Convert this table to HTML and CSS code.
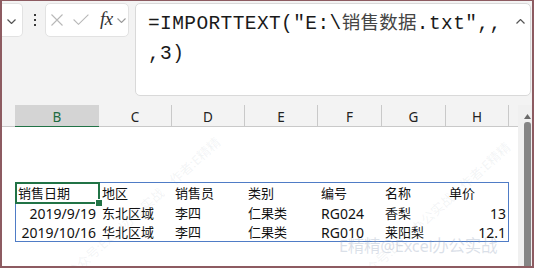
FILE: index.html
```html
<!DOCTYPE html>
<html>
<head>
<meta charset="utf-8">
<link rel="stylesheet" href="styles.css">
</head>
<body>
<div class="window">
  <div class="topbar">
    <div class="namebox">
      <svg width="9" height="5" viewBox="0 0 9 5"><path d="M0.5 0.5 L4.5 4.5 L8.5 0.5" stroke="#555" fill="none" stroke-width="1.2"/></svg>
    </div>
    <div class="dots"><i></i><i></i><i></i></div>
    <div class="fnbox">
      <svg class="ic-x" width="12" height="12" viewBox="0 0 12 12"><path d="M0.5 0.5 L11.5 11.5 M11.5 0.5 L0.5 11.5" stroke="#b8b8b8" stroke-width="1.1" fill="none"/></svg>
      <svg class="ic-ok" width="16" height="11" viewBox="0 0 16 11"><path d="M0.6 5.5 L5.5 10.3 L15.4 0.6" stroke="#b8b8b8" stroke-width="1.1" fill="none"/></svg>
      <span class="fx">fx</span>
      <svg class="ic-dd" width="9" height="5" viewBox="0 0 9 5"><path d="M0.5 0.5 L4.5 4.5 L8.5 0.5" stroke="#9a9a9a" fill="none" stroke-width="1.1"/></svg>
    </div>
    <div class="formula">
      <div class="ftext">=IMPORTTEXT("E:\<span class="cjk">销售数据</span>.txt",,<br>,3)</div>
      <svg class="collapse" width="9" height="5" viewBox="0 0 9 5"><path d="M0.5 4.5 L4.5 0.5 L8.5 4.5" stroke="#555" fill="none" stroke-width="1.2"/></svg>
    </div>
  </div>
  <div class="main">
    <div class="sheet">
      <div class="colhead">
        <div class="corner"></div>
        <div class="ch sel">B</div>
        <div class="ch">C</div>
        <div class="ch">D</div>
        <div class="ch">E</div>
        <div class="ch">F</div>
        <div class="ch">G</div>
        <div class="ch">H</div>
        <div class="rest"></div>
      </div>
      <div class="cells">
        <div class="table">
          <div class="cell active">销售日期</div>
          <div class="cell">地区</div>
          <div class="cell">销售员</div>
          <div class="cell">类别</div>
          <div class="cell">编号</div>
          <div class="cell">名称</div>
          <div class="cell">单价</div>

          <div class="cell num lat">2019/9/19</div>
          <div class="cell">东北区域</div>
          <div class="cell">李四</div>
          <div class="cell">仁果类</div>
          <div class="cell lat">RG024</div>
          <div class="cell">香梨</div>
          <div class="cell num lat">13</div>

          <div class="cell num lat">2019/10/16</div>
          <div class="cell">华北区域</div>
          <div class="cell">李四</div>
          <div class="cell">仁果类</div>
          <div class="cell lat">RG010</div>
          <div class="cell">莱阳梨</div>
          <div class="cell num lat">12.1</div>
        </div>
        <div class="wm wm-h">E精精@Excel办公实战</div>
        <div class="wm wm-d wm-d1">公众号:Excel办公实战　作者:E精精</div>
        <div class="wm wm-d wm-d2">公众号:Excel办公实战　作者:E精精</div>
      </div>
    </div>
    <div class="vscroll">
      <svg class="up" width="7" height="5" viewBox="0 0 7 5"><path d="M0 5 L3.5 0 L7 5 Z" fill="#6a6a6a"/></svg>
      <div class="thumb"></div>
    </div>
  </div>
</div>
</body>
</html>
```

FILE: styles.css
```css
* { box-sizing: border-box; }
html, body { margin: 0; padding: 0; }
body {
  width: 534px;
  height: 268px;
  overflow: hidden;
  background: #ffffff;
  font-family: "Noto Sans", "Noto Sans CJK SC", sans-serif;
}
.window {
  width: 534px;
  height: 268px;
  border-style: solid;
  border-color: #8d5b61;
  border-width: 1px 2px 2px 2px;
  display: flex;
  flex-direction: column;
  background: #f3f3f3;
}
.topbar {
  height: 104px;
  flex: none;
  display: flex;
  align-items: flex-start;
  padding-top: 2px;
  background: #f3f3f3;
}
.namebox {
  width: 21px;
  height: 34px;
  background: #fff;
  border: 1px solid #e2e2e2;
  border-left: none;
  border-radius: 0 5px 5px 0;
  display: flex;
  align-items: center;
  justify-content: flex-end;
  padding-right: 6px;
  padding-top: 2px;
}
.namebox svg { display: block; }
.dots {
  width: 22px;
  height: 34px;
  display: flex;
  flex-direction: column;
  align-items: center;
  justify-content: center;
  gap: 3px;
  padding-left: 1px;
}
.dots i {
  display: block;
  width: 2px;
  height: 2px;
  background: #3a3a3a;
}
.fnbox {
  width: 84px;
  height: 34px;
  background: #fff;
  border: 1px solid #e2e2e2;
  border-radius: 5px;
  display: flex;
  align-items: center;
}
.fnbox svg { display: block; flex: none; }
.ic-x { margin-left: 5px; }
.ic-ok { margin-left: 10px; margin-top: -1px; }
.fx {
  margin-left: 11px;
  font-family: "Liberation Serif", serif;
  font-style: italic;
  font-size: 19px;
  line-height: 20px;
  color: #333;
  letter-spacing: -0.5px;
  margin-top: -2px;
}
.ic-dd { margin-left: 4px; }
.formula {
  flex: 1;
  height: 93px;
  margin-left: 6px;
  margin-right: 1px;
  background: #fff;
  border: 1px solid #d9d9d9;
  border-radius: 5px;
  display: flex;
  align-items: flex-start;
  padding-left: 12px;
  padding-top: 2px;
}
.ftext {
  flex: 1;
  font-family: "Liberation Mono", "DejaVu Sans Mono", "Noto Sans CJK SC", monospace;
  font-size: 19.5px;
  letter-spacing: 0.4px;
  line-height: 30px;
  color: #1a1a1a;
  white-space: nowrap;
}
.cjk {
  font-family: "Noto Sans CJK SC", sans-serif;
  font-size: 18.5px;
  letter-spacing: 0.3px;
  color: #444;
}
.collapse {
  display: block;
  flex: none;
  margin-top: 13px;
  margin-right: 5px;
}
.main {
  flex: 1;
  display: flex;
  min-height: 0;
}
.sheet {
  flex: 1;
  display: flex;
  flex-direction: column;
}
.colhead {
  height: 22px;
  flex: none;
  display: grid;
  grid-template-columns: 13px 84px 73px 73px 73px 64px 64px 63px 1fr;
  background: #f3f3f3;
  border-bottom: 1px solid #c9c9c9;
}
.ch {
  border-right: 1px solid #c9c9c9;
  display: flex;
  align-items: center;
  justify-content: center;
  font-size: 13.5px;
  color: #222;
  padding-top: 1px;
}
.ch.sel {
  background: #d4d4d4;
  color: #1e6b41;
  border-right: none;
  border-bottom: 2px solid #217346;
  padding-top: 3px;
}
.cells {
  flex: 1;
  background: #fff;
  position: relative;
  padding-top: 55px;
  padding-left: 13px;
  overflow: hidden;
}
.table {
  width: 494px;
  display: grid;
  grid-template-columns: 83px 73px 73px 73px 64px 64px 62px;
  grid-template-rows: 20px 19px 19px;
  border: 1px solid #4f7cc6;
  font-family: "Noto Sans", "Noto Sans CJK SC", sans-serif;
  font-size: 13px;
  color: #111;
}
.cell {
  padding: 1px 3px 0 3px;
  line-height: 19px;
  white-space: nowrap;
  position: relative;
}
.cell.lat { font-size: 14px; }
.table .cell:nth-child(7n+1) { padding-left: 2px; }
.cell.num { text-align: right; }
.table .cell.num:nth-child(7n) { padding-right: 2px; }
.cell.active::after {
  content: "";
  position: absolute;
  left: -1px;
  top: -1px;
  right: -1px;
  bottom: -1px;
  border: 2px solid #217346;
}
.cell.active::before {
  content: "";
  position: absolute;
  right: -4px;
  bottom: -4px;
  width: 6px;
  height: 6px;
  background: #217346;
  border: 1px solid #fff;
  z-index: 2;
}
.wm {
  position: absolute;
  white-space: nowrap;
  font-family: "Noto Sans", "Noto Sans CJK SC", sans-serif;
  pointer-events: none;
}
.wm-h {
  left: 337px;
  top: 106px;
  font-size: 16.5px;
  color: rgba(150, 165, 190, 0.34);
  letter-spacing: -0.3px;
}
.wm-d {
  font-size: 13px;
  color: rgba(150, 160, 180, 0.12);
  transform: rotate(-42deg);
  transform-origin: 0 0;
}
.wm-d1 { left: 60px; top: 140px; }
.wm-d2 { left: 350px; top: 145px; }
.vscroll {
  width: 14px;
  flex: none;
  background: #f0f0f0;
  display: flex;
  flex-direction: column;
  align-items: flex-end;
  padding-right: 1px;
}
.up {
  display: block;
  margin-top: 9px;
}
.thumb {
  width: 7px;
  flex: 1;
  margin-top: 3px;
  background: #858585;
  border-radius: 3px 3px 0 0;
}
```
